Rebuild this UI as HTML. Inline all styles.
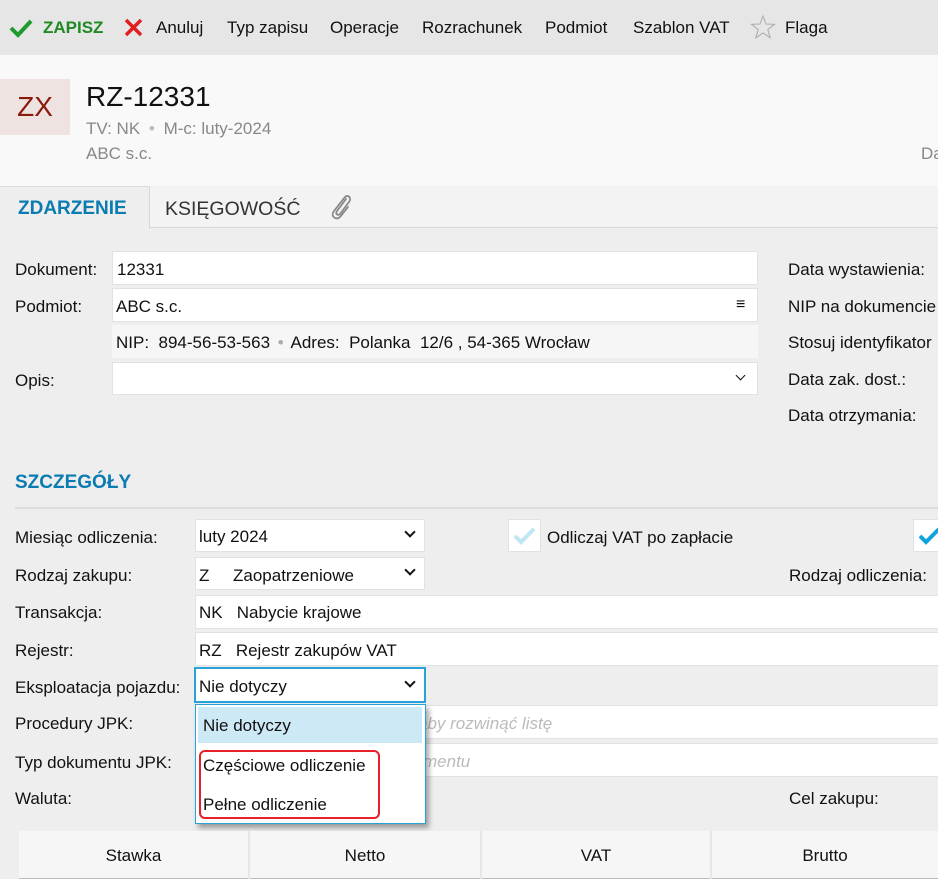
<!DOCTYPE html>
<html><head><meta charset="utf-8"><style>
*{margin:0;padding:0;box-sizing:border-box}
body{width:938px;height:879px;overflow:hidden;background:#eeeeee;font-family:"Liberation Sans",sans-serif;font-size:17px;color:#111;position:relative}
.a{position:absolute;white-space:nowrap}
.t{position:absolute;white-space:nowrap;line-height:20px}
.in{position:absolute;background:#fff;border:1px solid #e2e2e2}
.chev{position:absolute;width:8px;height:8px;border-right:2px solid #111;border-bottom:2px solid #111;transform:rotate(45deg)}
</style></head><body>
<!-- toolbar -->
<div class="a" style="left:0;top:0;width:938px;height:55px;background:#e6e6e6"></div>
<svg class="a" style="left:9px;top:18px" width="24" height="20" viewBox="0 0 24 20"><path d="M2 10 L9 17 L22 3" fill="none" stroke="#1f9a2e" stroke-width="4"/></svg>
<div class="t" style="left:43px;top:18px;color:#1f8a22;font-weight:bold">ZAPISZ</div>
<svg class="a" style="left:124px;top:18px" width="19" height="19" viewBox="0 0 19 19"><path d="M2 2 L17 17 M17 2 L2 17" stroke="#e02020" stroke-width="3.5"/></svg>
<div class="t" style="left:156px;top:18px">Anuluj</div>
<div class="t" style="left:227px;top:18px">Typ zapisu</div>
<div class="t" style="left:330px;top:18px">Operacje</div>
<div class="t" style="left:422px;top:18px">Rozrachunek</div>
<div class="t" style="left:545px;top:18px">Podmiot</div>
<div class="t" style="left:633px;top:18px">Szablon VAT</div>
<svg class="a" style="left:750px;top:14px" width="26" height="26" viewBox="0 0 26 26"><path d="M13 2 L16 10 L24.5 10.3 L17.8 15.5 L20.2 23.8 L13 19 L5.8 23.8 L8.2 15.5 L1.5 10.3 L10 10 Z" fill="none" stroke="#aaa" stroke-width="1"/></svg>
<div class="t" style="left:785px;top:18px">Flaga</div>
<!-- header -->
<div class="a" style="left:0;top:55px;width:938px;height:131px;background:#f9f9f9"></div>
<div class="a" style="left:0;top:79px;width:70px;height:56px;background:#efe3e1;color:#8a1a0c;font-size:28px;line-height:56px;text-align:center">ZX</div>
<div class="a" style="left:86px;top:81px;font-size:28px;line-height:32px">RZ-12331</div>
<div class="t" style="left:86px;top:119px;color:#888">TV: NK <span style="color:#bbb;margin:0 4px">•</span> M-c: luty-2024</div>
<div class="t" style="left:86px;top:144px;color:#888">ABC s.c.</div>
<div class="t" style="left:921px;top:144px;color:#888">Da</div>
<!-- tabs -->
<div class="a" style="left:0;top:186px;width:938px;height:42px;background:#f3f3f3;border-bottom:1px solid #d8d8d8"></div>
<div class="a" style="left:0;top:186px;width:150px;height:43px;background:#eeeeee;border-right:1px solid #d8d8d8;border-top:1px solid #ddd"></div>
<div class="t" style="left:18px;top:199px;font-size:19px;font-weight:bold;color:#0b7cb2">ZDARZENIE</div>
<div class="t" style="left:165px;top:199px;font-size:19.5px;color:#333">KSIĘGOWOŚĆ</div>
<svg class="a" style="left:329px;top:193px" width="25" height="28" viewBox="0 0 25 28"><path d="M17 6 L8 18 C6 21 9 23 11 21 L20 9 C23 5 19 1 16 4 L5 18 C1 23 7 28 11 24 L19 14" fill="none" stroke="#888" stroke-width="1.8" stroke-linecap="round"/></svg>
<!-- form -->
<div class="t" style="left:15px;top:260px">Dokument:</div>
<div class="in" style="left:112px;top:251px;width:646px;height:34px"></div>
<div class="t" style="left:117px;top:260px">12331</div>
<div class="t" style="left:15px;top:297px">Podmiot:</div>
<div class="in" style="left:112px;top:288px;width:646px;height:34px"></div>
<div class="t" style="left:116px;top:297px">ABC s.c.</div>
<div class="t" style="left:736px;top:295px;font-size:16px">≡</div>
<div class="a" style="left:112px;top:325px;width:646px;height:33px;background:#f6f6f6"></div>
<div class="t" style="left:116px;top:333px">NIP:&nbsp; 894-56-53-563 <span style="color:#aaa;margin:0 3px">•</span> Adres:&nbsp; Polanka&nbsp; 12/6 , 54-365 Wrocław</div>
<div class="t" style="left:15px;top:371px">Opis:</div>
<div class="in" style="left:112px;top:362px;width:646px;height:33px"></div>
<div class="chev" style="left:737px;top:372px;width:7px;height:7px;border-width:1.5px"></div>
<div class="t" style="left:788px;top:260px">Data wystawienia:</div>
<div class="t" style="left:788px;top:297px">NIP na dokumencie</div>
<div class="t" style="left:788px;top:333px">Stosuj identyfikator</div>
<div class="t" style="left:788px;top:370px">Data zak. dost.:</div>
<div class="t" style="left:788px;top:406px">Data otrzymania:</div>
<div class="t" style="left:15px;top:473px;font-size:19px;font-weight:bold;color:#0b7cb2">SZCZEGÓŁY</div>
<div class="a" style="left:15px;top:507px;width:923px;height:2px;background:#dcdcdc"></div>
<!-- details -->
<div class="t" style="left:15px;top:528px">Miesiąc odliczenia:</div>
<div class="in" style="left:195px;top:519px;width:230px;height:33px"></div>
<div class="t" style="left:199px;top:527px">luty 2024</div>
<div class="chev" style="left:406px;top:528px"></div>
<div class="in" style="left:508px;top:519px;width:33px;height:33px"></div>
<svg class="a" style="left:513px;top:526px" width="24" height="20" viewBox="0 0 24 20"><path d="M2 10 L8 16 L21 3" fill="none" stroke="#bfe6f4" stroke-width="4"/></svg>
<div class="t" style="left:547px;top:528px">Odliczaj VAT po zapłacie</div>
<div class="in" style="left:913px;top:519px;width:33px;height:33px"></div>
<svg class="a" style="left:918px;top:526px" width="24" height="20" viewBox="0 0 24 20"><path d="M2 10 L8 16 L21 3" fill="none" stroke="#12a3dc" stroke-width="4"/></svg>
<div class="t" style="left:15px;top:566px">Rodzaj zakupu:</div>
<div class="in" style="left:195px;top:557px;width:230px;height:33px"></div>
<div class="t" style="left:199px;top:566px">Z&nbsp;&nbsp;&nbsp;&nbsp; Zaopatrzeniowe</div>
<div class="chev" style="left:406px;top:566px"></div>
<div class="t" style="left:789px;top:566px">Rodzaj odliczenia:</div>
<div class="t" style="left:15px;top:603px">Transakcja:</div>
<div class="in" style="left:195px;top:595px;width:750px;height:34px"></div>
<div class="t" style="left:199px;top:603px">NK&nbsp;&nbsp; Nabycie krajowe</div>
<div class="t" style="left:15px;top:641px">Rejestr:</div>
<div class="in" style="left:195px;top:632px;width:750px;height:34px"></div>
<div class="t" style="left:199px;top:641px">RZ&nbsp;&nbsp; Rejestr zakupów VAT</div>
<div class="t" style="left:15px;top:678px">Eksploatacja pojazdu:</div>
<div class="a" style="left:194px;top:667px;width:232px;height:36px;background:#fff;border:2px solid #29a1d9"></div>
<div class="t" style="left:199px;top:677px">Nie dotyczy</div>
<div class="chev" style="left:406px;top:678px"></div>
<div class="t" style="left:15px;top:714px">Procedury JPK:</div>
<div class="in" style="left:420px;top:705px;width:525px;height:34px"></div>
<div class="t" style="left:418px;top:714px;color:#bbb;font-style:italic">aby rozwinąć listę</div>
<div class="t" style="left:15px;top:753px">Typ dokumentu JPK:</div>
<div class="in" style="left:420px;top:743px;width:525px;height:34px"></div>
<div class="t" style="left:423px;top:752px;color:#bbb;font-style:italic">mentu</div>
<div class="t" style="left:15px;top:789px">Waluta:</div>
<div class="t" style="left:789px;top:789px">Cel zakupu:</div>
<!-- dropdown -->
<div class="a" style="left:195px;top:704px;width:231px;height:120px;background:#fff;border:1px solid #29a1d9;box-shadow:3px 4px 5px rgba(0,0,0,0.35)"></div>
<div class="a" style="left:198px;top:707px;width:224px;height:36px;background:#cee9f6"></div>
<div class="t" style="left:203px;top:716px">Nie dotyczy</div>
<div class="a" style="left:199px;top:750px;width:181px;height:69px;border:2px solid #e8202a;border-radius:6px"></div>
<div class="t" style="left:203px;top:756px">Częściowe odliczenie</div>
<div class="t" style="left:203px;top:795px">Pełne odliczenie</div>
<!-- table -->
<div class="a" style="left:19px;top:831px;width:919px;height:48px;background:#f6f6f6;border-bottom:1px solid #bbb"></div>
<div class="a" style="left:248px;top:831px;width:2px;height:48px;background:#e6e6e6"></div>
<div class="a" style="left:480px;top:831px;width:2px;height:48px;background:#e6e6e6"></div>
<div class="a" style="left:710px;top:831px;width:2px;height:48px;background:#e6e6e6"></div>
<div class="t" style="left:19px;top:846px;width:229px;text-align:center">Stawka</div>
<div class="t" style="left:250px;top:846px;width:230px;text-align:center">Netto</div>
<div class="t" style="left:482px;top:846px;width:228px;text-align:center">VAT</div>
<div class="t" style="left:712px;top:846px;width:226px;text-align:center">Brutto</div>
</body></html>
